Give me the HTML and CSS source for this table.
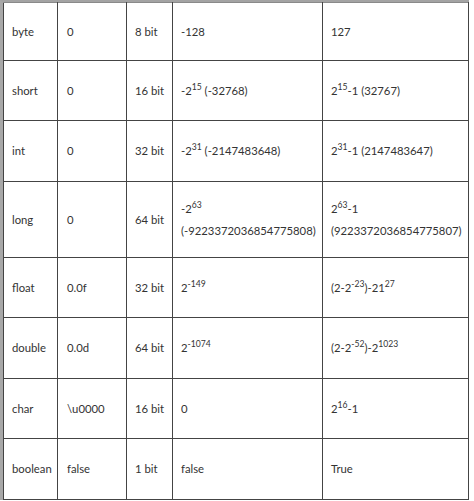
FILE: index.html
```html
<!DOCTYPE html>
<html>
<head>
<meta charset="utf-8">
<link rel="stylesheet" href="styles.css">
</head>
<body>
<div class="frame">
<table class="types">
  <colgroup>
    <col class="c1"><col class="c2"><col class="c3"><col class="c4"><col class="c5">
  </colgroup>
  <tr class="r1"><td>byte</td><td>0</td><td>8 bit</td><td>-128</td><td>127</td></tr>
  <tr class="r2"><td>short</td><td>0</td><td>16 bit</td><td>-2<sup>15</sup> (-32768)</td><td>2<sup>15</sup>-1 (32767)</td></tr>
  <tr class="r3"><td>int</td><td>0</td><td>32 bit</td><td>-2<sup>31</sup> (-2147483648)</td><td>2<sup>31</sup>-1 (2147483647)</td></tr>
  <tr class="r4"><td>long</td><td>0</td><td>64 bit</td><td>-2<sup>63</sup><br>(-9223372036854775808)</td><td>2<sup>63</sup>-1<br>(9223372036854775807)</td></tr>
  <tr class="r5"><td>float</td><td>0.0f</td><td>32 bit</td><td>2<sup>-149</sup></td><td>(2-2<sup>-23</sup>)-21<sup>27</sup></td></tr>
  <tr class="r6"><td>double</td><td>0.0d</td><td>64 bit</td><td>2<sup>-1074</sup></td><td>(2-2<sup>-52</sup>)-2<sup>1023</sup></td></tr>
  <tr class="r7"><td>char</td><td>\u0000</td><td>16 bit</td><td>0</td><td>2<sup>16</sup>-1</td></tr>
  <tr class="r8"><td>boolean</td><td>false</td><td>1 bit</td><td>false</td><td>True</td></tr>
</table>
</div>
</body>
</html>
```

FILE: styles.css
```css
html, body {
  margin: 0;
  padding: 0;
  background: #ffffff;
}

.frame {
  display: inline-block;
  border-top: 2px solid #a3a3a3;
  border-left: 3px solid #a8a8a8;
  background: #fff;
}

.types {
  border-collapse: collapse;
  table-layout: fixed;
  width: 466px;
  font-family: Lato, "Open Sans", sans-serif;
  font-size: 11.3px;
  color: #333333;
}

.c1 { width: 54px; }
.c2 { width: 69px; }
.c3 { width: 46px; }
.c4 { width: 150px; }
.c5 { width: 146px; }

.types td {
  border: 1px solid #444444;
  padding: 0 0 0 8px;
  vertical-align: middle;
  line-height: 22px;
  white-space: nowrap;
}

.types td:nth-child(2) { padding-left: 9px; }

.types tr:first-child td { border-top-color: #8a8a8a; }

.types sup {
  font-size: 8.6px;
  line-height: 0;
  vertical-align: 5px;
}

.r1 td { height: 57px; }
.r2 td { height: 59px; }
.r3 td { height: 60px; }
.r4 td { height: 75px; }
.r5 td { height: 59px; }
.r6 td { height: 60px; }
.r7 td { height: 59px; }
.r8 td { height: 60px; }
```
